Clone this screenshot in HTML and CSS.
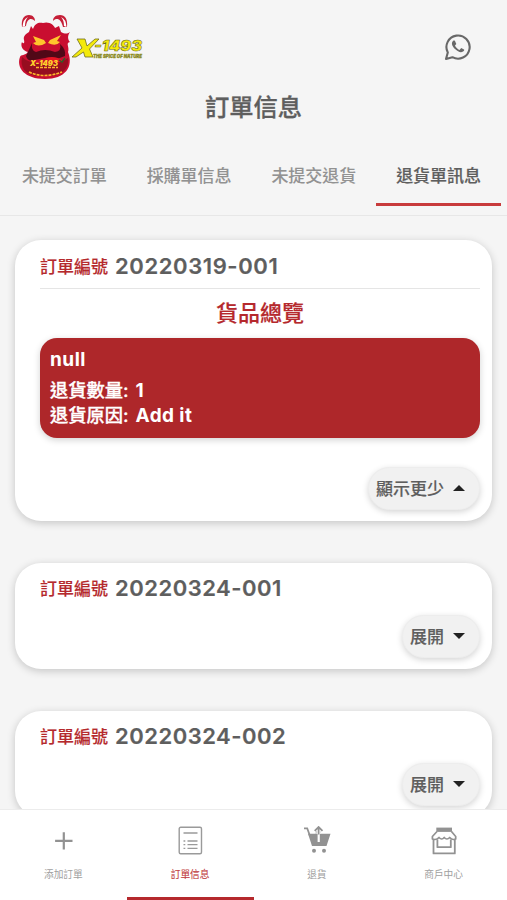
FILE: index.html
```html
<!DOCTYPE html>
<html lang="zh-Hant">
<head>
<meta charset="utf-8">
<meta name="viewport" content="width=device-width, initial-scale=1">
<title>訂單信息</title>
<link rel="stylesheet" href="styles.css">
</head>
<body>
<div class="app">
  <header class="header">
    <div class="brand-row">
      <svg class="logo" viewBox="0 0 130 70" width="130" height="70">
        <path d="M12 40C7 39 4 34 6 30C7 32 9 32 8 28C7 24 10 22 13 20L15 14L17 17C19 11 23 10 27 11C33 9 38 13 39 16L43 14L45 20C49 22 51 22 54 20C51 24 52 28 54 30C49 31 54 35 52 40C58 55 49 67 29 67C9 67 0 56 4 45C5 42 9 44 12 40Z" fill="#c90e30"/>
        <path d="M6 15C5 7 8 3 13 3C17 3 19 6 19 9C15 5 11 7 10 14Z" fill="#c51f37"/>
        <path d="M6.5 15Q7 7 12 5Q9 8 9 14Z" fill="#fff"/>
        <path d="M51 15C52 7 49 3 44 3C39 3 37 6 37 9C41 5 45 7 47 15Z" fill="#c51f37"/>
        <path d="M50.5 15Q50 7 45 5Q48 8 48 14Z" fill="#fff"/>
        <path d="M16 31Q13 38 10 44Q12 50 18 48L29 46L41 47L49 44Q50 37 44 32Q46 39 39 40Q29 36 20 40Q15 39 16 31Z" fill="#510817"/>
        <path d="M6 45Q3 61 20 64L38 64Q54 59 52 46Q44 52 29 52Q13 52 6 45Z" fill="#970d20"/>
        <path d="M17 24L28 28L30 31Q22 36 17 31L20 30ZM45 23L34 28L32 31Q40 35 44 30L41 29Z" fill="#ffc52c"/>
        <path d="M29 46Q40 43 47 49Q40 53 29 46Z" fill="#e71424"/>
        <path d="M43 48L46 50L49 46" fill="none" stroke="#315c26" stroke-width="1.5"/>
        <text x="14" y="54" class="crest-name" textLength="28" lengthAdjust="spacingAndGlyphs">X-1493</text>
        <path d="M20 55.5H42M13 60Q28 67 46 60" fill="none" stroke="#ffb62c" stroke-width="1.7" stroke-dasharray="3 1"/>
        <path d="M61 27H69L71 34L79 27H83L73.5 37L77 45H69L67.5 40L60 45H56L66 36Z" fill="#f4ea0b" stroke="#6e6c20" stroke-width=".8"/>
        <text x="78" y="38.5" class="brand-name" textLength="48" lengthAdjust="spacingAndGlyphs">-1493</text>
        <text x="77" y="45.5" class="brand-tag" textLength="49" lengthAdjust="spacingAndGlyphs">THE SPICE OF NATURE</text>
      </svg>
      <svg class="whatsapp" viewBox="0 0 28 28" width="28" height="28">
        <path d="M2 26L3.8 19.5A11.6 11.6 0 1 1 8.4 24.2Z" fill="none" stroke="#686868" stroke-width="2.1" stroke-linejoin="round"/>
        <path d="M9 8C7 10 8 13 11 16C14 19 17 20 19 18.5C20.5 17.5 20.3 16.7 20 16.4L17.2 15L15.5 17C13.5 16.2 11.8 14.5 11 12.6L12.3 11L11 8.1C10.5 7.4 9.6 7.5 9 8Z" fill="#686868"/>
      </svg>
    </div>
    <h1 class="title">訂單信息</h1>
    <nav class="tabs">
      <a class="tab">未提交訂單</a>
      <a class="tab">採購單信息</a>
      <a class="tab">未提交退貨</a>
      <a class="tab tab-active">退貨單訊息</a>
    </nav>
  </header>
  <main class="orders">
    <article class="card card-open">
      <div class="order-heading"><span class="order-label">訂單編號</span><span class="order-number">20220319-001</span></div>
      <h2 class="overview">貨品總覽</h2>
      <section class="product">
        <h3 class="product-name">null</h3>
        <p class="product-line">退貨數量: <span class="latin">1</span></p>
        <p class="product-line">退貨原因: <span class="latin">Add it</span></p>
      </section>
      <button class="toggle">顯示更少<svg class="caret" viewBox="0 0 12 6"><path d="M0 6L6 0L12 6Z"/></svg></button>
    </article>
    <article class="card">
      <div class="order-heading"><span class="order-label">訂單編號</span><span class="order-number">20220324-001</span></div>
      <button class="toggle">展開<svg class="caret" viewBox="0 0 12 6"><path d="M0 0L6 6L12 0Z"/></svg></button>
    </article>
    <article class="card">
      <div class="order-heading"><span class="order-label">訂單編號</span><span class="order-number">20220324-002</span></div>
      <button class="toggle">展開<svg class="caret" viewBox="0 0 12 6"><path d="M0 0L6 6L12 0Z"/></svg></button>
    </article>
  </main>
  <nav class="bottom-nav">
    <a class="nav-item">
      <svg class="nav-icon" viewBox="0 0 30 30"><path d="M15.8 6.2V23.5M7.1 14.8H24.5" fill="none" stroke="#929292" stroke-width="2.2"/></svg>
      <span>添加訂單</span>
    </a>
    <a class="nav-item nav-active">
      <svg class="nav-icon" viewBox="0 0 30 30"><g fill="none" stroke="#9a9a9a"><rect x="4.2" y="1.3" width="22.3" height="26.4" rx="1.5" stroke-width="1.4"/><path d="M8.5 7H22.5M12.5 15H22.5M12.5 18.6H22.5M12.5 22.4H22.5M8.5 15H10.3M8.5 18.6H10.3M8.5 22.4H10.3" stroke-width="1.3"/></g></svg>
      <span>訂單信息</span>
    </a>
    <a class="nav-item">
      <svg class="nav-icon" viewBox="0 0 30 30"><path d="M6 7.8H13.8V5H19V7.8H28.5L24.5 20H10Z" fill="#929292"/><path d="M2 2.3H5.2L8 10" fill="none" stroke="#929292" stroke-width="1.8"/><path d="M14.4 3V8H18.8V3" fill="#fff"/><path d="M15.6 7.8V16H17.8V7.8" fill="#fff"/><path d="M16.6 8.5V1.8M12.7 4.8L16.6 1L20.5 4.8" fill="none" stroke="#929292" stroke-width="1.8"/><circle cx="12" cy="24.7" r="2" fill="#929292"/><circle cx="22" cy="24.7" r="2" fill="#929292"/></svg>
      <span>退貨</span>
    </a>
    <a class="nav-item">
      <svg class="nav-icon" viewBox="0 0 30 30"><g fill="none" stroke="#929292" stroke-linejoin="round"><path d="M8 5.5L3.4 10.5V13Q7.5 14.5 10 11.5Q12.8 14.5 15.2 11.5Q17.9 14.5 20.7 11.5Q23.2 14.5 26.7 13V10.5L22.5 5.5" stroke-width="1.7"/><path d="M4.5 13.5V27.4H25.8V13.5M8.4 13.5V21.2H21.8V13.5" stroke-width="1.8"/></g><path d="M7.3 1.6H23V5.9H7.3Z" fill="#929292"/></svg>
      <span>商戶中心</span>
    </a>
  </nav>
</div>
</body>
</html>
```
FILE: styles.css
```css
* { box-sizing: border-box; }
body {
  margin: 0;
  background: #f5f5f5;
  color: #5e5e5e;
  font-family: Inter, "Noto Sans CJK TC", sans-serif;
}
.app { height: 900px; display: flex; flex-direction: column; overflow: hidden; }
.header { flex: none; height: 216px; border-bottom: 1px solid #e7e7e7; display: flex; flex-direction: column; }
.brand-row { height: 88px; padding: 12px 35px 0 16px; display: flex; justify-content: space-between; align-items: flex-start; }
.logo { display: block; overflow: visible; }
.whatsapp { display: block; margin-top: 21px; }
.crest-name { font: italic 900 8px Inter, sans-serif; fill: #ffd22c; }
.brand-name { font: italic 900 14px Inter, sans-serif; fill: #f4ea0b; stroke: #65631d; stroke-width: .5; }
.brand-tag { font: italic 900 5px Inter, sans-serif; fill: #77751c; stroke: #9c991c; stroke-width: .3; }
.title { height: 37px; margin: 0; padding-top: 1px; font-size: 24.3px; line-height: 37px; font-weight: 500; text-align: center; -webkit-text-stroke: .3px; }
.tabs { height: 81px; margin-top: auto; padding: 0 6px 9px 2px; display: grid; grid-template-columns: repeat(4, 1fr); }
.tab { display: flex; align-items: center; justify-content: center; padding-top: 11px; border-bottom: 3px solid transparent; color: #929292; font-size: 17px; font-weight: 500; -webkit-text-stroke: .08px; }
.tab-active { color: #5e5e5e; border-bottom-color: #c83b3c; -webkit-text-stroke: .2px; }
.orders { flex: 1; min-height: 0; overflow: hidden; padding: 24px 15px 0; display: flex; flex-direction: column; gap: 42px; }
.card { flex: none; height: 106px; padding: 0 12px 0 25px; background: #fff; border-radius: 26px; box-shadow: 0 2px 8px rgba(0,0,0,.2); display: flex; flex-direction: column; }
.card-open { height: 281px; }
.order-heading { height: 48px; display: flex; align-items: center; gap: 7px; padding-top: 2px; }
.card-open .order-heading { height: 49px; padding-top: 4px; border-bottom: 1.5px solid #e5e5e5; }
.order-label { margin-top: -2px; color: #b5292d; font-size: 17px; font-weight: 500; -webkit-text-stroke: .15px; }
.order-number { font-size: 22px; font-weight: 600; letter-spacing: .6px; -webkit-text-stroke: .2px; }
.card:not(.card-open) .order-number { letter-spacing: .5px; }
.overview { margin: 0; height: 49px; line-height: 49px; color: #b5292d; font-size: 22px; font-weight: 500; text-align: center; -webkit-text-stroke: .2px; }
.product { height: 100px; padding: 8px 10px; border-radius: 17px; background: #ae272a; color: #fff; box-shadow: 0 2px 7px rgba(0,0,0,.18); }
.card-open .order-heading, .overview, .product { width: 440px; }
.product-name { margin: 0; height: 32px; font-size: 19px; line-height: 27px; font-weight: 700; letter-spacing: .5px; }
.product-line { margin: 0; font-size: 18.3px; line-height: 25px; font-weight: 500; -webkit-text-stroke: .3px; }
.latin { margin-left: 2px; font-size: 19px; font-weight: 700; letter-spacing: .4px; -webkit-text-stroke: 0; }
.toggle { align-self: flex-end; height: 43px; margin: auto 0 11px; padding: 0 14px 2px 7px; border: 1px solid #ededed; border-radius: 22px; background: #f1f1f1; color: #5e5e5e; box-shadow: 0 2px 6px rgba(0,0,0,.17); display: flex; align-items: center; gap: 9px; font: 500 17px Inter, "Noto Sans CJK TC", sans-serif; -webkit-text-stroke: .15px; }
.caret { width: 12px; height: 6px; fill: #222; }
.bottom-nav { flex: none; height: 91px; background: #fff; border-top: 1px solid #ececec; display: grid; grid-template-columns: repeat(4, 1fr); }
.nav-item { display: flex; flex-direction: column; align-items: center; padding-top: 16px; gap: 11px; border-bottom: 3px solid transparent; color: #a0a0a0; font-size: 9.7px; line-height: 16px; }
.nav-active { color: #c13d41; border-bottom-color: #b5292d; -webkit-text-stroke: .1px; }
.nav-icon { width: 30px; height: 30px; }
```
